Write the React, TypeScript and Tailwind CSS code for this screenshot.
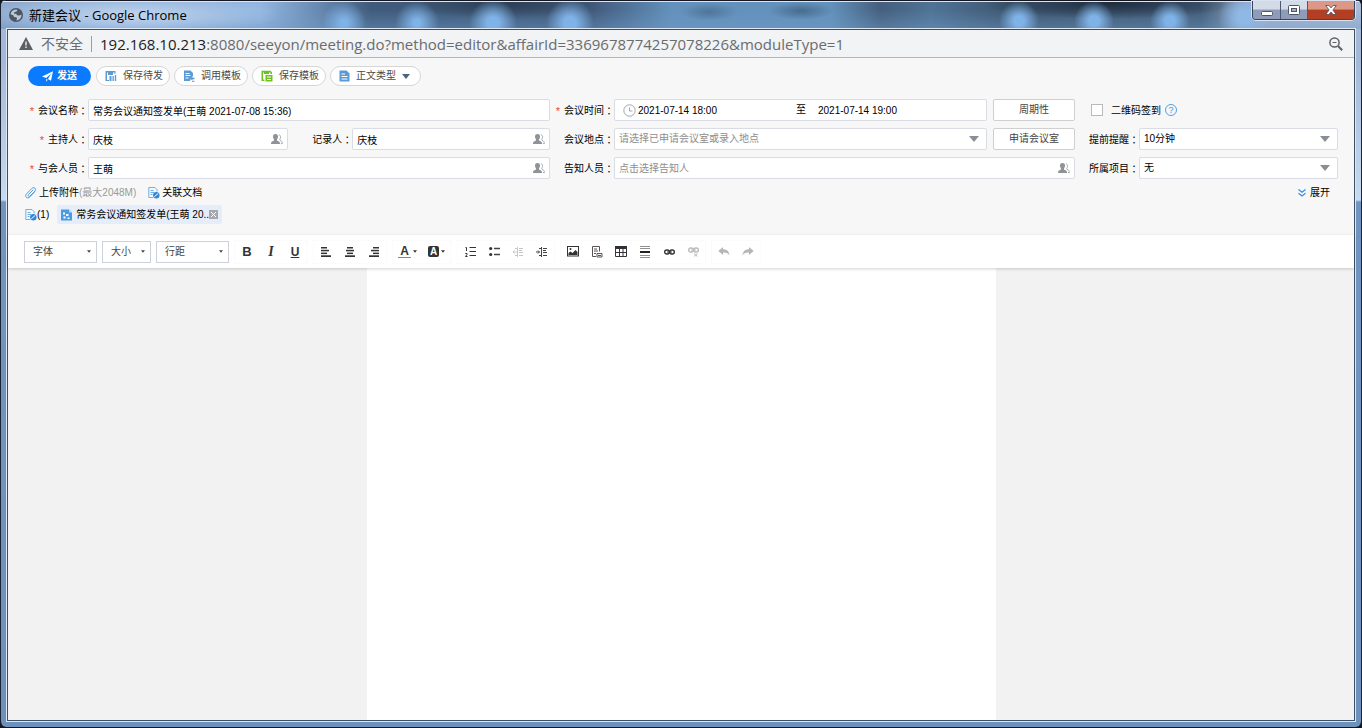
import type { ReactNode } from "react";

const iconTones = {
  blue: "#5b9bd5",
  green: "#6cc31d",
};

const fontSelects = [
  { label: "字体", width: "w-[73px]" },
  { label: "大小", width: "w-[49px]" },
  { label: "行距", width: "w-[73px]" },
];

/* ---------- icons ---------- */

function GlobeIcon() {
  return (
    <svg width="14" height="14" viewBox="0 0 14 14" aria-hidden="true">
      <circle cx="7" cy="7" r="7" fill="#4d5663" />
      <path
        d="M1.500 6.200C2 3.500 4.200 1.500 7.200 1.500L8.500 2 7.500 3.500 5.200 4.300 5 5.800 7.200 5.800 8 7.200 10.200 7.400 12.500 6.800C12.600 9.800 10.300 12.400 7.300 12.500L8 10.500 7.400 9.200 5 9 4.300 7.300z"
        fill="#b9c8da"
      />
    </svg>
  );
}

function WarningIcon() {
  return (
    <svg width="14" height="13" viewBox="0 0 14 13" aria-hidden="true">
      <path d="M7 0l7 13H0z" fill="#5b5e62" />
      <path d="M6.300 4.500h1.400v4H6.300zM6.300 9.600h1.400V11H6.300z" fill="#f1f3f4" />
    </svg>
  );
}

function ZoomOutIcon() {
  return (
    <svg width="14" height="14" viewBox="0 0 14 14" fill="none" stroke="#5f6064" aria-hidden="true">
      <circle cx="5.500" cy="5.500" r="4.600" strokeWidth="1.500" />
      <path d="M3.500 5.500h4" strokeWidth="1.100" />
      <path d="M9 9l4.200 4.200" strokeWidth="2" />
    </svg>
  );
}

function SendIcon() {
  return (
    <svg width="11" height="11" viewBox="0 0 11 11" fill="#fff" aria-hidden="true">
      <path d="M11 .3L9 9.800 5.900 7.900 9.300 2.600 4.200 7 0 5.600zM4.200 7.800l1.500.9-1.500 2z" />
    </svg>
  );
}

function SaveIcon({ color }: { color: string }) {
  return (
    <svg width="12" height="12" viewBox="0 0 12 12" fill={color} aria-hidden="true">
      <path d="M.5 1h10v3h-1V2.500H8V5H3V2.500H2V10h2v1H.5z" />
      <path d="M4.500 6h2v5h-2zM7.500 6h1.300v5H7.500zM9.800 5h1.400v6H9.800z" />
    </svg>
  );
}

function TemplateIcon({ color }: { color: string }) {
  return (
    <svg width="12" height="12" viewBox="0 0 12 12" aria-hidden="true">
      <path d="M1 .5h6.500L10 3v3L8 7.500 7 11H1z" fill={color} />
      <path d="M2.500 3.500h4M2.500 5.500h5M2.500 8h3" stroke="#fff" />
      <path d="M6.500 8.500l3-2v1.300h2v1.400h-2v1.300z" fill={color} />
      <path d="M9 11.300h2.500" stroke={color} />
    </svg>
  );
}

function SaveTemplateIcon({ color }: { color: string }) {
  return (
    <svg width="12" height="12" viewBox="0 0 12 12" aria-hidden="true">
      <path d="M.5.800h9l1.500 1.400V4H9.500V2.500H8V4H3V2.500H2V9.500h1.500V11h-3z" fill={color} />
      <path d="M4.500 5h7v6.500h-7z" fill={color} />
      <path d="M6 7h4M6 9.500h4" stroke="#fff" />
    </svg>
  );
}

function DocIcon({ color }: { color: string }) {
  return (
    <svg width="11" height="12" viewBox="0 0 11 12" aria-hidden="true">
      <path d="M.5.500h7l3 3v8H.5z" fill={color} />
      <path d="M2.500 4h3.500M2.500 6.500h6M2.500 9h6" stroke="#fff" />
    </svg>
  );
}

function Caret({ className, size = 10 }: { className?: string; size?: number }) {
  return (
    <svg width={size} height={size / 2 + 1} viewBox="0 0 10 6" className={className} aria-hidden="true">
      <path d="M0 0h10L5 6z" fill="currentColor" />
    </svg>
  );
}

function PeopleIcon() {
  return (
    <svg width="12" height="11" viewBox="0 0 12 11" aria-hidden="true">
      <path
        d="M4.500 0c1.800 0 2.600 1.200 2.500 2.800 0 1.300-.5 2-1 2.600 0 1 .3 1.400 1.600 1.900C8.700 7.700 9 8.500 9 10H0c0-1.500.3-2.300 1.400-2.700C2.700 6.800 3 6.400 3 5.400c-.5-.6-1-1.300-1-2.600C1.900 1.200 2.700 0 4.500 0z"
        fill="#8f9398"
      />
      <path d="M7.800.9c1.300 0 1.900 1 1.800 2.300-.1 1-.5 1.500-.9 2 .1 1 .4 1.300 1.300 1.700 1 .4 1.400 1.100 1.400 2.700H9.800" fill="none" stroke="#a5abb0" />
    </svg>
  );
}

function ClockIcon() {
  return (
    <svg width="13" height="13" viewBox="0 0 13 13" fill="none" stroke="#9aa9b3" aria-hidden="true">
      <circle cx="6.500" cy="6.500" r="5.700" />
      <path d="M6.500 3.500v3.500h3" />
    </svg>
  );
}

function HelpIcon() {
  return (
    <span className="flex h-3 w-3 items-center justify-center rounded-full border border-[#4aa3e8] text-[9px] leading-none text-[#3b97e0]">
      ?
    </span>
  );
}

function ClipIcon() {
  return (
    <svg width="12" height="12" viewBox="0 0 12 12" fill="none" stroke="#4b9fe1" strokeLinecap="round" aria-hidden="true">
      <path d="M9.800 4.600L5 9.800C3.900 11 2.300 11.300 1.300 10.400.3 9.400.5 8 1.600 6.900L6.700 1.500c.9-1 2.300-1.100 3.200-.3.900.9.800 2.100-.1 3L5.100 9c-.6.600-1.300.7-1.700.2-.5-.5-.3-1.100.2-1.700L8 3" />
    </svg>
  );
}

function LinkedDocIcon() {
  return (
    <svg width="12" height="12" viewBox="0 0 12 12" aria-hidden="true">
      <path d="M9 4.500V2.500L7 .5H.8v10H5" fill="none" stroke="#6fb0e6" />
      <path d="M2.500 3.500h3M2.500 5.500h3.500M2.500 7.500h2" stroke="#6fb0e6" />
      <circle cx="8.300" cy="8.300" r="3.200" fill="#2f86dd" />
      <path d="M6.300 9.800l4-3.500" stroke="#fff" />
    </svg>
  );
}

function MeetingFileIcon() {
  return (
    <svg width="11" height="12" viewBox="0 0 11 12" aria-hidden="true">
      <path d="M0 .5h8l3 3v8H0z" fill="#4a9be0" />
      <path d="M8 .5v3h3z" fill="#b5d8f5" />
      <path d="M2 3.500h2v2H2zM5 5h2.500v2H5zM2.500 7.500h2v2h-2zM6.500 8.500h2v1.500h-2z" fill="#fff" />
    </svg>
  );
}

function AlignIcon({ side }: { side: "left" | "center" | "right" }) {
  const short = { left: 0, center: 2, right: 4 }[side];
  const mid = { left: 0, center: 1, right: 2 }[side];
  return (
    <svg width="10" height="10" viewBox="0 0 10 10" fill="#333" aria-hidden="true">
      <rect x={short} y="0" width="6" height="1.500" />
      <rect x={mid} y="2.800" width="8" height="1.500" />
      <rect x={short} y="5.600" width="6" height="1.500" />
      <rect x="0" y="8.300" width="10" height="1.700" />
    </svg>
  );
}

function OrderedIcon() {
  return (
    <svg width="11" height="11" viewBox="0 0 11 11" fill="none" stroke="#333" aria-hidden="true">
      <path d="M4.500 1.500H11M4.500 5.500H11M4.500 9.500H11" strokeWidth="1.200" />
      <path d="M.5 1.500h1V5M.3 7.500h1.700v1L.5 10.500H2.500" />
    </svg>
  );
}

function BulletIcon() {
  return (
    <svg width="11" height="11" viewBox="0 0 11 11" aria-hidden="true">
      <path d="M5 2.500h6M5 8.500h6" stroke="#444" strokeWidth="1.400" />
      <circle cx="1.700" cy="2.500" r="1.600" fill="#333" />
      <circle cx="1.700" cy="8.500" r="1.600" fill="#333" />
    </svg>
  );
}

function IndentIcon({ color, flip }: { color: string; flip?: boolean }) {
  return (
    <svg width="12" height="10" viewBox="0 0 12 10" fill="none" stroke={color} aria-hidden="true">
      <path d="M5.500 0v10M7 1.500h4M7 3.500h3M7 5.500h4M7 8.500h4M3 1.500h2M3 8.500h2" />
      <path d={flip ? "M4.500 5H1M2.500 3.500L1 5l1.500 1.500" : "M0 5h3.500M2 3.500L3.500 5 2 6.500"} />
    </svg>
  );
}

function ImageIcon() {
  return (
    <svg width="12" height="11" viewBox="0 0 12 11" aria-hidden="true">
      <rect x=".5" y=".5" width="11" height="9.500" fill="#fff" stroke="#333" />
      <path d="M1.500 9V7l2-1.500 2 1.500 3-3 2 2v3z" fill="#333" />
      <circle cx="3.500" cy="3" r="1" fill="#333" />
    </svg>
  );
}

function TemplateDocIcon() {
  return (
    <svg width="11" height="12" viewBox="0 0 11 12" fill="none" stroke="#5a5256" aria-hidden="true">
      <path d="M4 10.500H.5v-10h7v5M2 3h3M2 5h4M2 7.500h2" />
      <path d="M5 7.500h5v3.500H5zM6 9.500h3" />
    </svg>
  );
}

function TableIcon() {
  return (
    <svg width="12" height="11" viewBox="0 0 12 11" aria-hidden="true">
      <path d="M0 0h12v3H0z" fill="#2f2f38" />
      <path d="M.5 1v9.500h11V1M4.500 2v8.500M8 2v8.500M0 6.500h12" fill="none" stroke="#3a3238" />
    </svg>
  );
}

function RuleIcon() {
  return (
    <svg width="10" height="12" viewBox="0 0 10 12" aria-hidden="true">
      <path d="M0 .5h10M0 2.500h10M0 9.500h10M0 11.500h10" stroke="#8d928d" />
      <path d="M0 6h10" stroke="#222" strokeWidth="2" />
    </svg>
  );
}

function ChainIcon({ broken }: { broken?: boolean }) {
  const color = broken ? "#b9bcb9" : "#333";
  return (
    <svg width="11" height="10" viewBox="0 0 11 10" fill="none" stroke={color} aria-hidden="true">
      <rect x=".7" y={broken ? 1 : 3} width="4.600" height="4" rx="2" strokeWidth="1.400" />
      <rect x="5.700" y={broken ? 1 : 3} width="4.600" height="4" rx="2" strokeWidth="1.400" />
      <path d={broken ? "M3 3h5M6 6.500l3.500 3M9.500 6.500L6 9.500" : "M3 5h5"} />
    </svg>
  );
}

function UndoIcon({ redo }: { redo?: boolean }) {
  return (
    <svg width="12" height="9" viewBox="0 0 12 9" className={redo ? "-scale-x-100" : ""} aria-hidden="true">
      <path d="M5 0v2.300c3.700 0 6.300 2 6.500 6.200C10.300 6.300 8.300 5.500 5 5.600V8L.3 4z" fill="#b4b8b3" />
    </svg>
  );
}

/* ---------- form parts ---------- */

function FieldLabel({ htmlFor, required, children }: { htmlFor: string; required?: boolean; children: ReactNode }) {
  return (
    <label htmlFor={htmlFor} className="flex shrink-0 items-center justify-end pt-0.5 whitespace-nowrap text-black">
      {required && <span className="mr-1 text-[11px] leading-none text-[#e5483f]">*</span>}
      {children}
      <span className="font-['Noto_Sans_CJK_JP',sans-serif]">：</span>
    </label>
  );
}

function Box({ children, className = "" }: { children: ReactNode; className?: string }) {
  return (
    <div className={`relative flex h-[22px] min-w-0 flex-1 items-center rounded-xs border border-[#dadce5] bg-white ${className}`}>
      {children}
    </div>
  );
}

function PersonField({ id, value, placeholder }: { id: string; value?: string; placeholder?: string }) {
  return (
    <Box>
      <input
        id={id}
        defaultValue={value}
        placeholder={placeholder}
        className="h-5 min-w-0 flex-1 bg-transparent px-1 text-black outline-none placeholder:text-[#8e8e8e]"
      />
      <button type="button" aria-label="选择人员" className="mr-1">
        <PeopleIcon />
      </button>
    </Box>
  );
}

function SelectField({ id, options, muted }: { id: string; options: string[]; muted?: boolean }) {
  return (
    <Box>
      <select
        id={id}
        className={`h-5 w-full appearance-none bg-transparent pl-1 outline-none ${muted ? "text-[#8e8e8e]" : "text-black"}`}
      >
        {options.map((option) => (
          <option key={option}>{option}</option>
        ))}
      </select>
      <Caret className="pointer-events-none absolute right-[7px] text-[#8a8e94]" />
    </Box>
  );
}

function PillButton({ icon, children }: { icon: ReactNode; children: ReactNode }) {
  return (
    <button
      type="button"
      className="flex h-5 items-center gap-1.5 rounded-full border border-[#d6d6d6] bg-white pr-1.5 pl-2 text-[#4a4a4a]"
    >
      {icon}
      {children}
    </button>
  );
}

function SquareButton({ children }: { children: ReactNode }) {
  return (
    <button
      type="button"
      className="ml-1.5 h-[22px] w-[82px] shrink-0 rounded-xs border border-[#cfcfcf] bg-white text-[#444]"
    >
      {children}
    </button>
  );
}

function ToolGroup({ children }: { children: ReactNode }) {
  return <div className="flex h-6 items-center border border-[#fbfbfb]">{children}</div>;
}

function Tool({ label, wide, children }: { label: string; wide?: boolean; children: ReactNode }) {
  return (
    <button
      type="button"
      aria-label={label}
      className={`flex h-5 items-center justify-center gap-0.5 text-[#333] ${wide ? "w-[29px]" : "w-6"}`}
    >
      {children}
    </button>
  );
}

/* ---------- sections ---------- */

function TitleBar() {
  return (
    <header className="flex h-[29px] shrink-0 items-start justify-between border-t border-[#15161f] bg-[radial-gradient(ellipse_150px_20px_at_130px_14px,#c3d5ee_0,#a9c4e6cc_55%,#a9c4e600),radial-gradient(circle_22px_at_343px_22px,#7fb2e6_15%,#7fb2e600),radial-gradient(circle_22px_at_416px_22px,#7fb2e6_15%,#7fb2e600),radial-gradient(circle_24px_at_492px_22px,#7fb2e6_25%,#7fb2e600),radial-gradient(circle_24px_at_569px_22px,#7fb2e6_25%,#7fb2e600),radial-gradient(circle_20px_at_1018px_20px,#7fb2e6_25%,#7fb2e600),radial-gradient(circle_20px_at_1093px_20px,#7fb2e6_25%,#7fb2e600),radial-gradient(circle_20px_at_1169px_20px,#7fb2e6_25%,#7fb2e600),radial-gradient(circle_26px_at_1243px_16px,#8fb8e6_25%,#8fb8e600),radial-gradient(ellipse_28px_9px_at_708px_11px,#46678ab0,#46678a00),radial-gradient(ellipse_32px_9px_at_800px_10px,#3c5b7ab0,#3c5b7a00),radial-gradient(ellipse_130px_16px_at_1110px_2px,#1f2c3d,#1f2c3d00),radial-gradient(ellipse_100px_16px_at_500px_2px,#2b3d52,#2b3d5200),linear-gradient(#00000000_30%,#6f9bc870),linear-gradient(90deg,#8ea9cb_0,#92b6e0_260px,#6687ae_320px,#3f5b7b_370px,#40597a_590px,#6391bb_670px,#6391bb_830px,#445f7d_880px,#4f7396_930px,#3d566f_1010px,#435d79_1200px,#a3b5d1_1260px,#a9bbd6_100%)] pl-2 shadow-[inset_0_1px_0_#dbe7f5]">
      <div className="flex h-7 items-center gap-1.5">
        <GlobeIcon />
        <h1 className="font-['Open_Sans','Noto_Sans_CJK_SC',sans-serif] text-[13px] text-black">
          新建会议 - Google Chrome
        </h1>
      </div>
      <div className="mr-1.5 flex h-[19px] overflow-hidden rounded-b-[4px] border border-t-0 border-[#37445c] shadow-[0_0_0_1px_#d8e2f0]">
        <button
          type="button"
          aria-label="最小化"
          className="flex w-7 items-center justify-center border-r border-[#4a5872] bg-linear-to-b from-[#d3dae8] from-45% to-[#8f9cb9] to-50%"
        >
          <svg width="12" height="5" viewBox="0 0 12 5" className="mt-1.5">
            <rect x=".5" y=".5" width="11" height="4" rx="1" fill="#fff" stroke="#4b566b" />
          </svg>
        </button>
        <button
          type="button"
          aria-label="最大化"
          className="flex w-[27px] items-center justify-center border-r border-[#4a5872] bg-linear-to-b from-[#d3dae8] from-45% to-[#8f9cb9] to-50%"
        >
          <svg width="12" height="10" viewBox="0 0 12 10">
            <rect x=".5" y=".5" width="11" height="9" rx="1" fill="#fff" stroke="#4b566b" />
            <rect x="3.500" y="3.500" width="5" height="3" fill="#9fb0cc" stroke="#4b566b" />
          </svg>
        </button>
        <button
          type="button"
          aria-label="关闭"
          className="flex w-[46px] items-center justify-center bg-linear-to-b from-[#dd9787] from-45% to-[#b23f22] to-50%"
        >
          <svg width="12" height="10" viewBox="0 0 12 10">
            <path
              d="M.7.500h3.200L6 2.900 8.100.5h3.200L7.900 5l3.400 4.500H8.100L6 7.100 3.900 9.500H.7L4.100 5z"
              fill="#fff"
              stroke="#4b4652"
              strokeWidth=".8"
            />
          </svg>
        </button>
      </div>
    </header>
  );
}

function AddressBar() {
  return (
    <div className="flex h-7 shrink-0 items-center border-b border-[#b3b7b9] bg-[#f1f3f4] px-[11px] font-['Open_Sans','Noto_Sans_CJK_SC',sans-serif] text-sm leading-5 text-[#6a6c70]">
      <WarningIcon />
      <span className="ml-2">不安全</span>
      <span className="mx-2 h-4 w-px bg-[#9b9ea1]" />
      <p className="flex-1 truncate text-[15px]">
        <span className="text-[#202124]">192.168.10.213</span>
        :8080/seeyon/meeting.do?method=editor&amp;affairId=3369678774257078226&amp;moduleType=1
      </p>
      <button type="button" aria-label="缩小">
        <ZoomOutIcon />
      </button>
    </div>
  );
}

function ActionBar() {
  return (
    <div className="flex gap-1 pt-2 pl-5">
      <button
        type="button"
        className="mr-px flex h-5 w-[63px] items-center justify-center gap-1 rounded-full bg-[#0a7bfe] font-bold text-white"
      >
        <SendIcon />
        发送
      </button>
      <PillButton icon={<SaveIcon color={iconTones.blue} />}>保存待发</PillButton>
      <PillButton icon={<TemplateIcon color={iconTones.blue} />}>调用模板</PillButton>
      <PillButton icon={<SaveTemplateIcon color={iconTones.green} />}>保存模板</PillButton>
      <PillButton icon={<DocIcon color={iconTones.blue} />}>
        正文类型
        <Caret size={8} className="mr-1 text-[#4b6580]" />
      </PillButton>
    </div>
  );
}

function MeetingForm() {
  return (
    <div className="mt-[13px] grid grid-cols-[80px_minmax(0,462fr)_64px_minmax(0,461fr)_64px_minmax(0,199fr)] gap-y-[7px] pr-4">
      <FieldLabel htmlFor="title" required>会议名称</FieldLabel>
      <Box>
        <input
          id="title"
          defaultValue="常务会议通知签发单(王萌 2021-07-08 15:36)"
          className="h-5 w-full bg-transparent px-1 text-black outline-none"
        />
      </Box>
      <FieldLabel htmlFor="start" required>会议时间</FieldLabel>
      <div className="flex">
        <Box className="pl-2">
          <ClockIcon />
          <input id="start" defaultValue="2021-07-14 18:00" className="ml-0.5 h-5 w-[158px] bg-transparent text-black outline-none" />
          <label htmlFor="end" className="text-black">至</label>
          <input id="end" defaultValue="2021-07-14 19:00" className="ml-3 h-5 min-w-0 flex-1 bg-transparent text-black outline-none" />
        </Box>
        <SquareButton>周期性</SquareButton>
      </div>
      <div className="col-span-2 flex items-center pl-4 text-black">
        <input
          id="qrcode"
          type="checkbox"
          className="h-3 w-3 appearance-none border border-[#b9b9b9] bg-white checked:bg-[#0a7bfe]"
        />
        <label htmlFor="qrcode" className="mr-1 ml-2 pt-0.5">二维码签到</label>
        <HelpIcon />
      </div>

      <FieldLabel htmlFor="host" required>主持人</FieldLabel>
      <div className="flex gap-6">
        <PersonField id="host" value="庆枝" />
        <div className="flex flex-[1.200]">
          <FieldLabel htmlFor="recorder">记录人</FieldLabel>
          <PersonField id="recorder" value="庆枝" />
        </div>
      </div>
      <FieldLabel htmlFor="place">会议地点</FieldLabel>
      <div className="flex">
        <SelectField id="place" options={["请选择已申请会议室或录入地点"]} muted />
        <SquareButton>申请会议室</SquareButton>
      </div>
      <FieldLabel htmlFor="remind">提前提醒</FieldLabel>
      <SelectField id="remind" options={["10分钟"]} />

      <FieldLabel htmlFor="members" required>与会人员</FieldLabel>
      <PersonField id="members" value="王萌" />
      <FieldLabel htmlFor="notify">告知人员</FieldLabel>
      <PersonField id="notify" placeholder="点击选择告知人" />
      <FieldLabel htmlFor="project">所属项目</FieldLabel>
      <SelectField id="project" options={["无"]} />
    </div>
  );
}

function Attachments() {
  return (
    <div className="pr-6 pb-[11px] pl-[17px] text-black">
      <div className="mt-1.5 flex h-4 items-center">
        <button type="button" className="flex items-center gap-0.5">
          <ClipIcon />
          <span>
            上传附件<span className="text-[#999]">(最大2048M)</span>
          </span>
        </button>
        <button type="button" className="ml-3 flex items-center gap-0.5">
          <LinkedDocIcon />
          关联文档
        </button>
        <button type="button" className="ml-auto flex items-center gap-1">
          <svg width="8" height="8" viewBox="0 0 8 8" fill="none" stroke="#2f8fe8" strokeWidth="1.200">
            <path d="M.5.500L4 3.200 7.500.5M.5 4.300L4 7l3.500-2.700" />
          </svg>
          展开
        </button>
      </div>
      <div className="mt-1 flex h-[19px] items-center">
        <LinkedDocIcon />
        <span>(1)</span>
        <div className="ml-2 flex h-[19px] items-center gap-1 rounded-xs bg-[#e4edf9] px-1">
          <MeetingFileIcon />
          <a href="#file" className="text-black">常务会议通知签发单(王萌 20..</a>
          <button type="button" aria-label="删除" className="-ml-1 bg-[#a7a7ae] p-0.5">
            <svg width="5" height="5" viewBox="0 0 5 5" stroke="#fff">
              <path d="M0 0l5 5M5 0L0 5" />
            </svg>
          </button>
        </div>
      </div>
    </div>
  );
}

function EditorToolbar() {
  return (
    <div className="relative z-10 flex h-[33px] shrink-0 items-center gap-[5px] bg-white pl-4 shadow-[0_1px_3px_#0000002e]">
      {fontSelects.map((item) => (
        <div key={item.label} className={`relative flex h-[22px] items-center border border-[#ccd0da] ${item.width}`}>
          <select aria-label={item.label} className="h-5 w-full appearance-none bg-transparent pl-2 text-[#444] outline-none">
            <option>{item.label}</option>
          </select>
          <Caret size={4} className="pointer-events-none absolute right-[5px] text-[#444]" />
        </div>
      ))}
      <ToolGroup>
        <Tool label="加粗"><b className="text-[13px] leading-none font-bold">B</b></Tool>
        <Tool label="斜体"><i className="font-['Liberation_Serif',serif] text-[14px] leading-none font-bold">I</i></Tool>
        <Tool label="下划线"><u className="text-[12px] leading-none font-bold">U</u></Tool>
      </ToolGroup>
      <ToolGroup>
        <Tool label="左对齐"><AlignIcon side="left" /></Tool>
        <Tool label="居中"><AlignIcon side="center" /></Tool>
        <Tool label="右对齐"><AlignIcon side="right" /></Tool>
      </ToolGroup>
      <ToolGroup>
        <Tool label="文字颜色" wide>
          <span className="border-b border-[#888] px-0.5 text-[12px] leading-[11px] font-bold">A</span>
          <Caret size={4} />
        </Tool>
        <Tool label="背景颜色" wide>
          <span className="rounded-xs bg-[#333] px-0.5 text-[10px] leading-[11px] font-bold text-white">A</span>
          <Caret size={4} />
        </Tool>
      </ToolGroup>
      <ToolGroup>
        <Tool label="编号列表"><OrderedIcon /></Tool>
        <Tool label="项目列表"><BulletIcon /></Tool>
        <Tool label="减少缩进"><IndentIcon color="#c4c8c4" flip /></Tool>
        <Tool label="增加缩进"><IndentIcon color="#444" /></Tool>
      </ToolGroup>
      <ToolGroup>
        <Tool label="图片"><ImageIcon /></Tool>
        <Tool label="模板"><TemplateDocIcon /></Tool>
        <Tool label="表格"><TableIcon /></Tool>
        <Tool label="水平线"><RuleIcon /></Tool>
        <Tool label="链接"><ChainIcon /></Tool>
        <Tool label="取消链接"><ChainIcon broken /></Tool>
      </ToolGroup>
      <ToolGroup>
        <Tool label="撤销"><UndoIcon /></Tool>
        <Tool label="重做"><UndoIcon redo /></Tool>
      </ToolGroup>
    </div>
  );
}

export default function App() {
  return (
    <div className="h-screen bg-[#15161f] px-px pb-px font-['Liberation_Sans','Noto_Sans_CJK_SC',sans-serif] text-[10px] leading-4">
      <div className="-mx-px flex h-full flex-col overflow-hidden rounded-[6px] border-x border-[#1b2433] bg-[linear-gradient(#a3b9d7_0,#a3b9d7_60px,#c6daf0_200px,#7095c0_202px,#6c91bc_100%)]">
        <TitleBar />
        <div className="mx-1.5 mb-1.5 flex min-h-0 flex-1 flex-col border border-[#3d4f63] shadow-[0_0_0_1px_#dde8f4]">
          <AddressBar />
          <div className="shrink-0 bg-[#f7f7f7]">
            <ActionBar />
            <MeetingForm />
            <Attachments />
          </div>
          <EditorToolbar />
          <main className="flex min-h-0 flex-1 justify-center bg-[#f2f2f2]">
            <div contentEditable suppressContentEditableWarning aria-label="正文" className="w-[629px] bg-white outline-none" />
          </main>
        </div>
      </div>
    </div>
  );
}
